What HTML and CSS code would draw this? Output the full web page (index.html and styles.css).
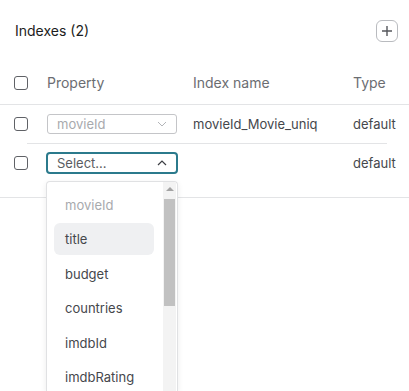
FILE: index.html
```html
<!doctype html>
<html>
  <head>
    <meta charset="utf-8" />
    <meta name="viewport" content="width=device-width, initial-scale=1" />
    <link rel="stylesheet" href="styles.css">
  </head>

  <body>
    <section class="indexes">
      <div class="indexes-header">
        <h2>Indexes (2)</h2>
        <button class="icon-button" title="Add index">
          <svg width="12" height="12" viewBox="0 0 12 12">
            <path d="M6 1v10M1 6h10" stroke="#55575c" stroke-width="1.4" fill="none" />
          </svg>
        </button>
      </div>

      <div class="grid-row head">
        <span class="checkbox"></span>
        <span>Property</span>
        <span>Index name</span>
        <span>Type</span>
      </div>

      <div class="grid-row">
        <span class="checkbox"></span>
        <div class="select disabled">
          <span>movieId</span>
          <svg width="10" height="6" viewBox="0 0 10 6">
            <path d="M1 1l4 4 4-4" stroke="#b3b5b9" stroke-width="1" fill="none" />
          </svg>
        </div>
        <span>movieId_Movie_uniq</span>
        <span>default</span>
      </div>
      <div class="row-divider"></div>

      <div class="grid-row last">
        <span class="checkbox"></span>
        <div class="select-wrap">
          <div class="select open">
            <span>Select...</span>
            <svg width="10" height="6" viewBox="0 0 10 6">
              <path d="M1 5l4-4 4 4" stroke="#3c3e43" stroke-width="1.2" fill="none" />
            </svg>
          </div>
          <div class="dropdown">
            <ul class="options">
              <li class="muted">movieId</li>
              <li class="active">title</li>
              <li>budget</li>
              <li>countries</li>
              <li>imdbId</li>
              <li>imdbRating</li>
            </ul>
            <div class="scrollbar">
              <span class="arrow"></span>
              <span class="thumb"></span>
            </div>
          </div>
        </div>
        <span></span>
        <span>default</span>
      </div>
    </section>
  </body>
</html>
```

FILE: styles.css
```css
html,
body {
  height: 100%;
}

body {
  font-family: Inter, "Noto Sans", sans-serif;
  margin: 0;
  background: #fff;
  color: #45474c;
}

.indexes {
  min-height: 100%;
}

.indexes-header {
  align-items: center;
  display: flex;
  height: 61px;
  justify-content: space-between;
  padding: 0 11px 0 15px;
}

h2 {
  color: #1c1d21;
  font-size: 14px;
  font-weight: 400;
  margin: 0;
}

.icon-button {
  align-items: center;
  background: #fff;
  border: 1px solid #b9bbbf;
  border-radius: 6px;
  display: flex;
  height: 22px;
  justify-content: center;
  padding: 0;
  width: 22px;
}

.grid-row {
  align-items: center;
  display: grid;
  font-size: 13px;
  grid-template-columns: 33px 146px 160px 1fr;
  height: 38px;
  padding-left: 14px;
}

.grid-row.head {
  border-bottom: 1px solid #e3e4e6;
  color: #6b6d72;
  font-size: 14px;
  height: 43px;
}

.grid-row.last {
  border-bottom: 1px solid #e3e4e6;
  height: 38px;
  padding-bottom: 15px;
}

.row-divider {
  border-top: 1px solid #e3e4e6;
  margin: 0 22px 0 27px;
}

.checkbox {
  border: 1.5px solid #5f6166;
  border-radius: 3px;
  box-sizing: border-box;
  display: block;
  height: 14px;
  width: 14px;
}

.select {
  align-items: center;
  border: 1px solid #c4c5c8;
  border-radius: 3px;
  box-sizing: border-box;
  display: flex;
  height: 20px;
  justify-content: space-between;
  padding: 0 9px 0 9px;
  width: 130px;
}

.select.disabled {
  color: #a8aaae;
}

.select-wrap {
  margin-left: -1px;
  position: relative;
}

.select.open {
  border: 2px solid #2b7a8c;
  border-radius: 4px;
  color: #5a5c61;
  height: 22px;
  width: 132px;
}

.dropdown {
  background: #fff;
  border: 1px solid #e0e1e3;
  border-bottom: none;
  border-radius: 4px 4px 0 0;
  box-shadow: 0 2px 6px rgba(0, 0, 0, 0.08);
  box-sizing: border-box;
  display: flex;
  height: 210px;
  left: 0;
  overflow: hidden;
  position: absolute;
  top: 29px;
  width: 132px;
  z-index: 2;
}

.options {
  display: flex;
  flex: 1;
  flex-direction: column;
  gap: 2.4px;
  list-style: none;
  margin: 0;
  padding: 7px 9px 0 7px;
}

.options li {
  align-items: center;
  border-radius: 6px;
  color: #45474c;
  display: flex;
  flex: none;
  height: 32px;
  padding-left: 11px;
}

.options li.muted {
  color: #a8aaae;
}

.options li.active {
  background: #eff0f2;
}

.scrollbar {
  background: #f3f3f3;
  display: flex;
  flex-direction: column;
  margin-right: 1px;
  width: 13px;
}

.arrow {
  border-bottom: 4px solid #a3a3a3;
  border-left: 4px solid transparent;
  border-right: 4px solid transparent;
  height: 0;
  margin: 5px auto 8px;
  width: 0;
}

.thumb {
  background: #c1c1c1;
  height: 107px;
  margin: 0 1px;
}
```
